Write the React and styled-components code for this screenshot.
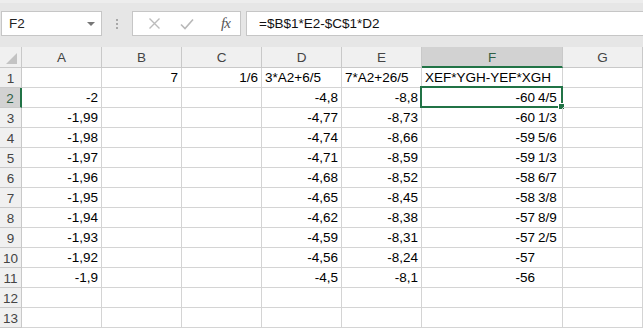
import React from 'react';
import styled, { createGlobalStyle } from 'styled-components';

const GlobalStyle = createGlobalStyle`
  html, body {
    margin: 0;
    padding: 0;
    background: #ffffff;
    font-family: "Liberation Sans", Arial, sans-serif;
  }
`;

const Window = styled.div`
  width: 643px;
  height: 329px;
  overflow: hidden;
  background: #ffffff;
`;

// barra da formula

const FormulaBar = styled.div`
  height: 47px;
  box-sizing: border-box;
  padding: 8px 0 0 1px;
  background: #e6e6e6;
  border-top: 3px solid #ededed;
  display: flex;
  align-items: flex-start;
`;

const NameBox = styled.div`
  width: 101px;
  height: 25px;
  box-sizing: border-box;
  background: #ffffff;
  border: 1px solid #c6c6c6;
  display: flex;
  align-items: center;
  justify-content: space-between;
  padding: 0 6px 0 7px;
  font-size: 13.5px;
  color: #222;
`;

const DropArrow = styled.span`
  width: 0;
  height: 0;
  border-left: 4px solid transparent;
  border-right: 4px solid transparent;
  border-top: 4px solid #777;
`;

const Grip = styled.div`
  width: 30px;
  height: 25px;
  display: flex;
  flex-direction: column;
  align-items: center;
  justify-content: center;
  gap: 2px;

  span {
    width: 2px;
    height: 2px;
    background: #a8a8a8;
  }
`;

const ButtonGroup = styled.div`
  width: 109px;
  height: 25px;
  box-sizing: border-box;
  background: #ffffff;
  border: 1px solid #c6c6c6;
  display: flex;
  align-items: center;
  padding-left: 12px;
  gap: 13px;
`;

const ToolIcon = styled.span`
  width: 19px;
  display: flex;
  justify-content: center;
  color: ${(p) => p.$color || '#bcbcbc'};
`;

const Fx = styled.span`
  margin-left: 12px;
  font-family: "Liberation Serif", "Times New Roman", serif;
  font-style: italic;
  font-size: 15px;
  color: #555;
  letter-spacing: -1px;
`;

const FormulaInput = styled.div`
  flex: 1;
  height: 25px;
  margin-left: 5px;
  box-sizing: border-box;
  background: #ffffff;
  border: 1px solid #c6c6c6;
  border-right: none;
  display: flex;
  align-items: center;
  padding-left: 12px;
  font-size: 13.5px;
  color: #111;
`;

// grade da planilha

const Sheet = styled.div`
  display: grid;
  grid-template-columns: 22px repeat(5, 80px) 141px 1fr;
  grid-auto-rows: 20px;
  grid-template-rows: 21px;
`;

const HeadCell = styled.div`
  box-sizing: border-box;
  background: ${(p) => (p.$active ? '#d2d2d2' : '#f0f0f0')};
  border-right: 1px solid ${(p) => (p.$active && p.$row ? '#217346' : '#c9c9c9')};
  border-bottom: 1px solid ${(p) => (p.$active && !p.$row ? '#217346' : '#c9c9c9')};
  ${(p) => p.$active && p.$row && 'border-right-width: 2px;'}
  ${(p) => p.$active && !p.$row && 'border-bottom-width: 2px;'}
  display: flex;
  align-items: center;
  justify-content: center;
  font-size: 13.5px;
  color: ${(p) => (p.$active ? '#2f5f44' : '#444')};
  padding-top: 1px;
  position: relative;
`;

const Corner = styled(HeadCell)`
  &::after {
    content: '';
    position: absolute;
    right: 4px;
    bottom: 3px;
    width: 0;
    height: 0;
    border-left: 11px solid transparent;
    border-bottom: 11px solid #c3c3c3;
  }
`;

const Cell = styled.div`
  box-sizing: border-box;
  border-right: 1px solid #d4d4d4;
  border-bottom: 1px solid #d4d4d4;
  display: flex;
  align-items: flex-end;
  justify-content: ${(p) => (p.$left ? 'flex-start' : 'flex-end')};
  padding: 0 3px 2px 3px;
  font-size: 13.5px;
  color: #000;
  white-space: nowrap;
  position: relative;
  overflow: visible;
`;

const Fraction = styled.span`
  display: inline-block;
  width: 24px;
  padding-left: 3px;
  box-sizing: border-box;
  text-align: left;
`;

const Selection = styled.div`
  position: absolute;
  left: -2px;
  top: -2px;
  right: -1px;
  bottom: -1px;
  border: 2px solid #217346;
  pointer-events: none;

  &::after {
    content: '';
    position: absolute;
    right: -4px;
    bottom: -4px;
    width: 5px;
    height: 5px;
    background: #217346;
    border: 1px solid #ffffff;
  }
`;

const columns = ['A', 'B', 'C', 'D', 'E', 'F', 'G'];

const aValues = ['-2', '-1,99', '-1,98', '-1,97', '-1,96', '-1,95', '-1,94', '-1,93', '-1,92', '-1,9'];
const dValues = ['-4,8', '-4,77', '-4,74', '-4,71', '-4,68', '-4,65', '-4,62', '-4,59', '-4,56', '-4,5'];
const eValues = ['-8,8', '-8,73', '-8,66', '-8,59', '-8,52', '-8,45', '-8,38', '-8,31', '-8,24', '-8,1'];
const fValues = [
  ['-60', '4/5'], ['-60', '1/3'], ['-59', '5/6'], ['-59', '1/3'], ['-58', '6/7'],
  ['-58', '3/8'], ['-57', '8/9'], ['-57', '2/5'], ['-57', ''], ['-56', ''],
];

const firstRow = [
  { v: '' },
  { v: '7' },
  { v: '1/6' },
  { v: '3*A2+6/5', left: true },
  { v: '7*A2+26/5', left: true },
  { v: 'XEF*YGH-YEF*XGH', left: true },
  { v: '' },
];

const XIcon = () => (
  <svg width="13" height="13" viewBox="0 0 13 13">
    <path d="M1.5 1.5 L11.5 11.5 M11.5 1.5 L1.5 11.5" stroke="currentColor" strokeWidth="1.4" fill="none" />
  </svg>
);

const CheckIcon = () => (
  <svg width="14" height="12" viewBox="0 0 14 12">
    <path d="M1 6.5 L5 10.5 L13 1.5" stroke="currentColor" strokeWidth="1.6" fill="none" />
  </svg>
);

const App = () => {
  const rows = [firstRow];
  for (let i = 0; i < 10; i++) {
    rows.push([
      { v: aValues[i] },
      { v: '' },
      { v: '' },
      { v: dValues[i] },
      { v: eValues[i] },
      { frac: fValues[i], selected: i === 0 },
      { v: '' },
    ]);
  }
  rows.push(columns.map(() => ({ v: '' })));
  rows.push(columns.map(() => ({ v: '' })));

  return (
    <Window>
      <GlobalStyle />
      <FormulaBar>
        <NameBox>
          F2
          <DropArrow />
        </NameBox>
        <Grip>
          <span />
          <span />
          <span />
        </Grip>
        <ButtonGroup>
          <ToolIcon><XIcon /></ToolIcon>
          <ToolIcon $color="#b8b8b8"><CheckIcon /></ToolIcon>
          <Fx>fx</Fx>
        </ButtonGroup>
        <FormulaInput>=$B$1*E2-$C$1*D2</FormulaInput>
      </FormulaBar>

      <Sheet>
        <Corner />
        {columns.map((c) => (
          <HeadCell key={c} $active={c === 'F'}>{c}</HeadCell>
        ))}
        {rows.map((row, r) => (
          <React.Fragment key={r}>
            <HeadCell $row $active={r === 1}>{r + 1}</HeadCell>
            {row.map((cell, c) => (
              <Cell key={c} $left={cell.left}>
                {cell.frac ? (
                  <>
                    {cell.frac[0]}
                    <Fraction>{cell.frac[1]}</Fraction>
                  </>
                ) : (
                  cell.v
                )}
                {cell.selected && <Selection />}
              </Cell>
            ))}
          </React.Fragment>
        ))}
      </Sheet>
    </Window>
  );
};

export default App;
